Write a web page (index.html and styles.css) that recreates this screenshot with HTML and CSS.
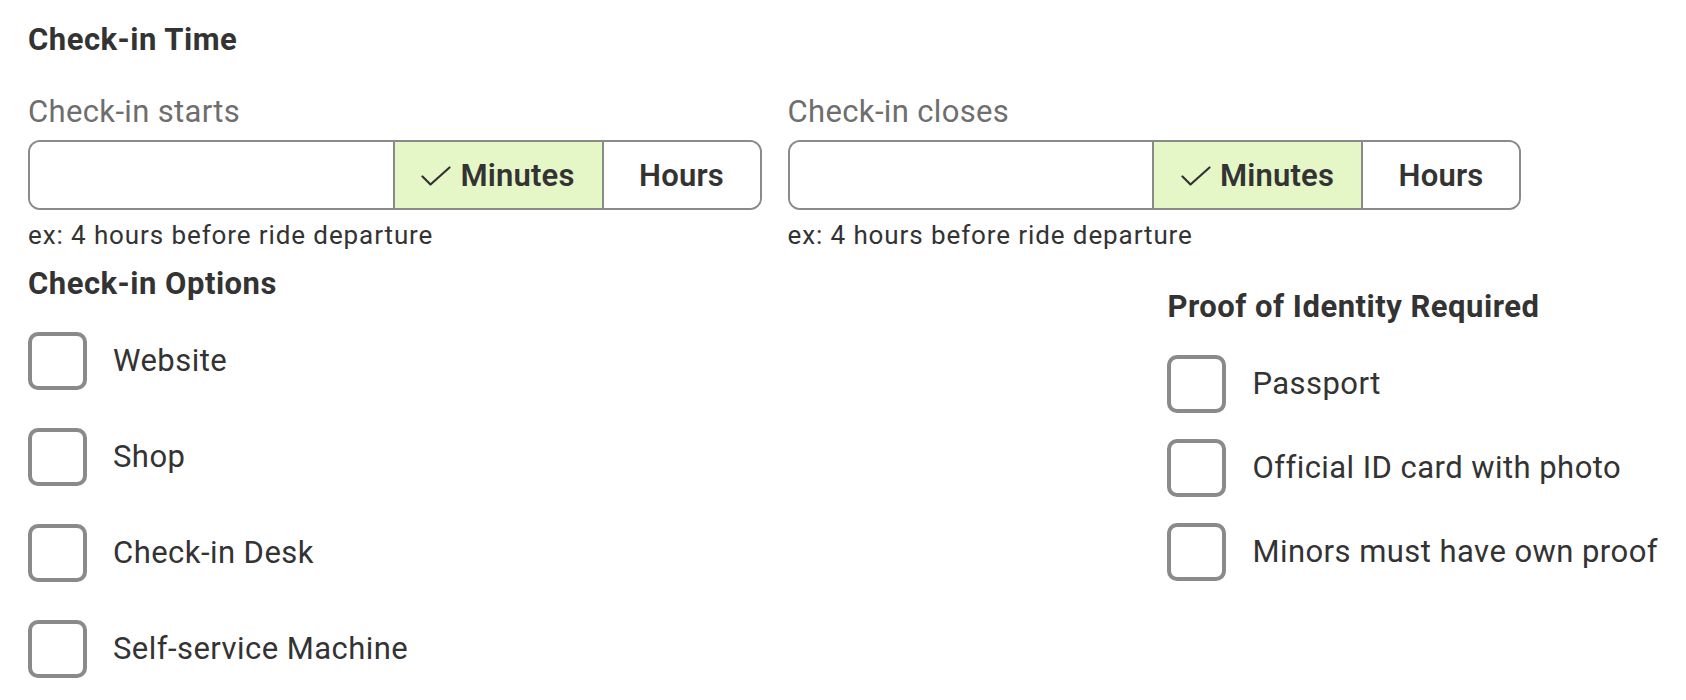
FILE: index.html
```html
<!DOCTYPE html>
<html lang="en">
<head>
<meta charset="utf-8">
<title>Check-in</title>
<link rel="stylesheet" href="styles.css">
</head>
<body>
<div class="page">
  <h2 class="heading">Check-in Time</h2>
  <div class="fields">
    <div class="field">
      <div class="field-label">Check-in starts</div>
      <div class="seg-input">
        <div class="seg-text"></div>
        <div class="seg seg-active">
          <svg class="check" viewBox="0 0 30 20" width="30" height="20"><polyline points="1.5,10.5 9.5,18.5 28.5,1.5" fill="none" stroke="#333" stroke-width="2.2" stroke-linecap="round" stroke-linejoin="round"/></svg>
          <span>Minutes</span>
        </div>
        <div class="seg seg-hours"><span>Hours</span></div>
      </div>
      <div class="helper">ex: 4 hours before ride departure</div>
    </div>
    <div class="field">
      <div class="field-label">Check-in closes</div>
      <div class="seg-input">
        <div class="seg-text"></div>
        <div class="seg seg-active">
          <svg class="check" viewBox="0 0 30 20" width="30" height="20"><polyline points="1.5,10.5 9.5,18.5 28.5,1.5" fill="none" stroke="#333" stroke-width="2.2" stroke-linecap="round" stroke-linejoin="round"/></svg>
          <span>Minutes</span>
        </div>
        <div class="seg seg-hours"><span>Hours</span></div>
      </div>
      <div class="helper">ex: 4 hours before ride departure</div>
    </div>
  </div>

  <div class="options">
    <div class="col col-left">
      <h2 class="heading">Check-in Options</h2>
      <ul class="checklist checklist-wide">
        <li class="check-item"><span class="box"></span><span class="item-text">Website</span></li>
        <li class="check-item"><span class="box"></span><span class="item-text">Shop</span></li>
        <li class="check-item"><span class="box"></span><span class="item-text">Check-in Desk</span></li>
        <li class="check-item"><span class="box"></span><span class="item-text">Self-service Machine</span></li>
      </ul>
    </div>
    <div class="col col-right">
      <h2 class="heading">Proof of Identity Required</h2>
      <ul class="checklist checklist-tight">
        <li class="check-item"><span class="box"></span><span class="item-text">Passport</span></li>
        <li class="check-item"><span class="box"></span><span class="item-text">Official ID card with photo</span></li>
        <li class="check-item"><span class="box"></span><span class="item-text">Minors must have own proof</span></li>
      </ul>
    </div>
  </div>
</div>
</body>
</html>
```

FILE: styles.css
```css
* { box-sizing: border-box; }

html, body {
  margin: 0;
  padding: 0;
  background: #ffffff;
}

body {
  font-family: Roboto, "Liberation Sans", Arial, sans-serif;
  color: #333333;
}

.page {
  padding: 23px 28px 0 28px;
}

.heading {
  margin: 0;
  font-size: 31px;
  line-height: 34px;
  font-weight: 700;
  letter-spacing: 0.5px;
  color: #333333;
}

.fields {
  display: flex;
  gap: 26px;
  margin-top: 39px;
}

.field {
  width: 45%;
}

.field-label {
  font-size: 31px;
  line-height: 32px;
  letter-spacing: 0.35px;
  color: #6e6e6e;
  margin-bottom: 12px;
}

.seg-input {
  display: flex;
  height: 70px;
  border: 2px solid #8a8a8a;
  border-radius: 12px;
  overflow: hidden;
}

.seg-text {
  flex: 1;
  background: #ffffff;
}

.seg {
  display: flex;
  align-items: center;
  justify-content: center;
  border-left: 2px solid #8a8a8a;
  font-size: 31px;
  font-weight: 600;
  letter-spacing: 0.2px;
  color: #333333;
}

.seg-active {
  width: 209px;
  gap: 9px;
  background: #e6f7c7;
}

.seg-hours {
  width: 158px;
  background: #ffffff;
}

.check {
  display: block;
  margin-top: 1px;
}

.helper {
  margin-top: 10px;
  font-size: 26px;
  line-height: 30px;
  letter-spacing: 0.9px;
  color: #333333;
}

.options {
  display: flex;
  justify-content: space-between;
  margin-top: 17px;
}

.col-right {
  padding-top: 23px;
}

.checklist {
  list-style: none;
  margin: 31px 0 0 0;
  padding: 0;
  display: flex;
  flex-direction: column;
}

.checklist-wide { gap: 38px; }
.checklist-tight { gap: 26px; }

.check-item {
  display: flex;
  align-items: center;
  gap: 26px;
}

.box {
  width: 59px;
  height: 58px;
  border: 4px solid #8a8a8a;
  border-radius: 10px;
  flex: none;
}

.item-text {
  font-size: 31px;
  line-height: 36px;
  letter-spacing: 0.45px;
  color: #333333;
}
```
